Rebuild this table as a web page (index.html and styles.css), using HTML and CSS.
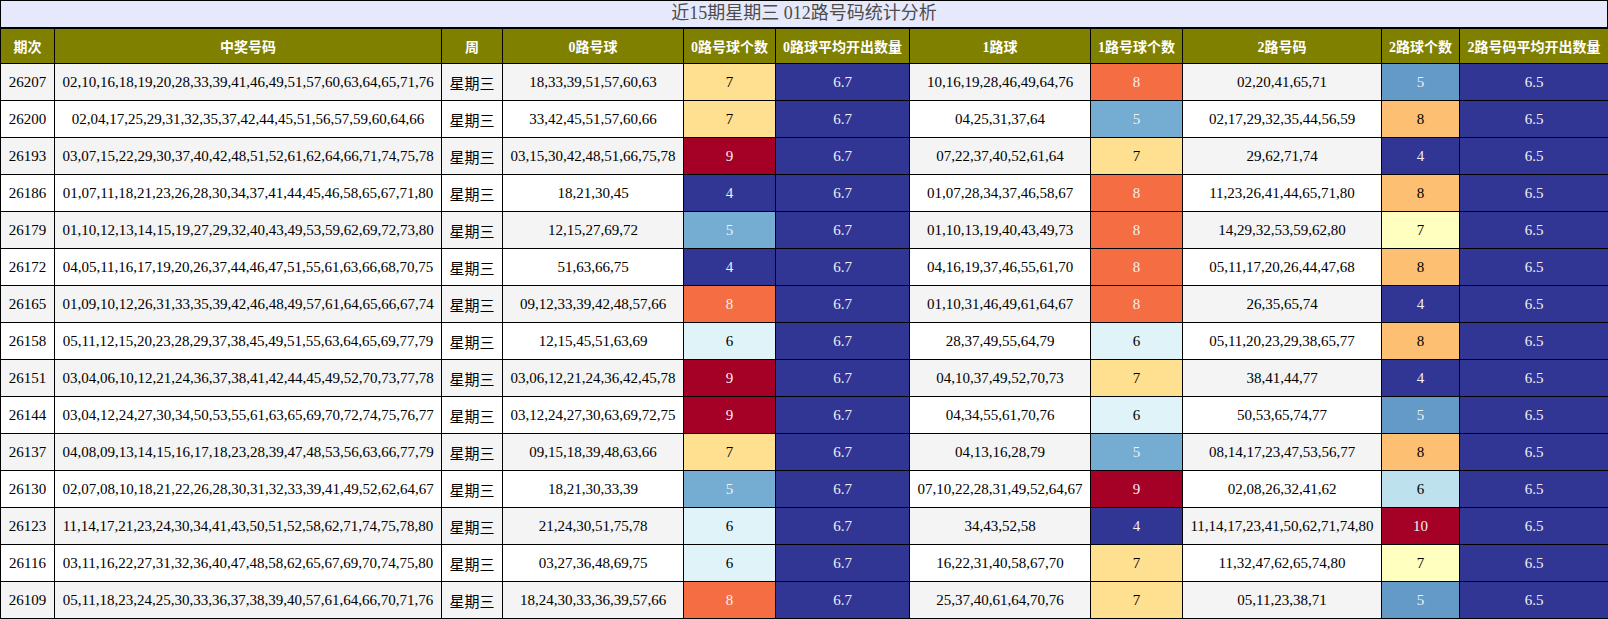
FILE: index.html
```html
<!DOCTYPE html>
<html lang="zh-CN">
<head>
<meta charset="utf-8">
<title>近15期星期三 012路号码统计分析</title>
<link rel="stylesheet" href="styles.css">
</head>
<body>
<div class="title">近15期星期三 012路号码统计分析</div>
<table class="stats">
<colgroup>
<col class="w-qc"><col class="w-zj"><col class="w-zhou"><col class="w-l0"><col class="w-n0"><col class="w-a0"><col class="w-l1"><col class="w-n1"><col class="w-l2"><col class="w-n2"><col class="w-a2">
</colgroup>
<thead>
<tr><th>期次</th><th>中奖号码</th><th>周</th><th>0路号球</th><th>0路号球个数</th><th>0路球平均开出数量</th><th>1路球</th><th>1路号球个数</th><th>2路号码</th><th>2路球个数</th><th>2路号码平均开出数量</th></tr>
</thead>
<tbody>
<tr><td>26207</td><td>02,10,16,18,19,20,28,33,39,41,46,49,51,57,60,63,64,65,71,76</td><td class="wk">星期三</td><td>18,33,39,51,57,60,63</td><td class="q6">7</td><td class="q0">6.7</td><td>10,16,19,28,46,49,64,76</td><td class="q8">8</td><td>02,20,41,65,71</td><td class="r1">5</td><td class="q0">6.5</td></tr>
<tr><td>26200</td><td>02,04,17,25,29,31,32,35,37,42,44,45,51,56,57,59,60,64,66</td><td class="wk">星期三</td><td>33,42,45,51,57,60,66</td><td class="q6">7</td><td class="q0">6.7</td><td>04,25,31,37,64</td><td class="q2">5</td><td>02,17,29,32,35,44,56,59</td><td class="r7">8</td><td class="q0">6.5</td></tr>
<tr><td>26193</td><td>03,07,15,22,29,30,37,40,42,48,51,52,61,62,64,66,71,74,75,78</td><td class="wk">星期三</td><td>03,15,30,42,48,51,66,75,78</td><td class="q10">9</td><td class="q0">6.7</td><td>07,22,37,40,52,61,64</td><td class="q6">7</td><td>29,62,71,74</td><td class="q0">4</td><td class="q0">6.5</td></tr>
<tr><td>26186</td><td>01,07,11,18,21,23,26,28,30,34,37,41,44,45,46,58,65,67,71,80</td><td class="wk">星期三</td><td>18,21,30,45</td><td class="q0">4</td><td class="q0">6.7</td><td>01,07,28,34,37,46,58,67</td><td class="q8">8</td><td>11,23,26,41,44,65,71,80</td><td class="r7">8</td><td class="q0">6.5</td></tr>
<tr><td>26179</td><td>01,10,12,13,14,15,19,27,29,32,40,43,49,53,59,62,69,72,73,80</td><td class="wk">星期三</td><td>12,15,27,69,72</td><td class="q2">5</td><td class="q0">6.7</td><td>01,10,13,19,40,43,49,73</td><td class="q8">8</td><td>14,29,32,53,59,62,80</td><td class="r5">7</td><td class="q0">6.5</td></tr>
<tr><td>26172</td><td>04,05,11,16,17,19,20,26,37,44,46,47,51,55,61,63,66,68,70,75</td><td class="wk">星期三</td><td>51,63,66,75</td><td class="q0">4</td><td class="q0">6.7</td><td>04,16,19,37,46,55,61,70</td><td class="q8">8</td><td>05,11,17,20,26,44,47,68</td><td class="r7">8</td><td class="q0">6.5</td></tr>
<tr><td>26165</td><td>01,09,10,12,26,31,33,35,39,42,46,48,49,57,61,64,65,66,67,74</td><td class="wk">星期三</td><td>09,12,33,39,42,48,57,66</td><td class="q8">8</td><td class="q0">6.7</td><td>01,10,31,46,49,61,64,67</td><td class="q8">8</td><td>26,35,65,74</td><td class="q0">4</td><td class="q0">6.5</td></tr>
<tr><td>26158</td><td>05,11,12,15,20,23,28,29,37,38,45,49,51,55,63,64,65,69,77,79</td><td class="wk">星期三</td><td>12,15,45,51,63,69</td><td class="q4">6</td><td class="q0">6.7</td><td>28,37,49,55,64,79</td><td class="q4">6</td><td>05,11,20,23,29,38,65,77</td><td class="r7">8</td><td class="q0">6.5</td></tr>
<tr><td>26151</td><td>03,04,06,10,12,21,24,36,37,38,41,42,44,45,49,52,70,73,77,78</td><td class="wk">星期三</td><td>03,06,12,21,24,36,42,45,78</td><td class="q10">9</td><td class="q0">6.7</td><td>04,10,37,49,52,70,73</td><td class="q6">7</td><td>38,41,44,77</td><td class="q0">4</td><td class="q0">6.5</td></tr>
<tr><td>26144</td><td>03,04,12,24,27,30,34,50,53,55,61,63,65,69,70,72,74,75,76,77</td><td class="wk">星期三</td><td>03,12,24,27,30,63,69,72,75</td><td class="q10">9</td><td class="q0">6.7</td><td>04,34,55,61,70,76</td><td class="q4">6</td><td>50,53,65,74,77</td><td class="r1">5</td><td class="q0">6.5</td></tr>
<tr><td>26137</td><td>04,08,09,13,14,15,16,17,18,23,28,39,47,48,53,56,63,66,77,79</td><td class="wk">星期三</td><td>09,15,18,39,48,63,66</td><td class="q6">7</td><td class="q0">6.7</td><td>04,13,16,28,79</td><td class="q2">5</td><td>08,14,17,23,47,53,56,77</td><td class="r7">8</td><td class="q0">6.5</td></tr>
<tr><td>26130</td><td>02,07,08,10,18,21,22,26,28,30,31,32,33,39,41,49,52,62,64,67</td><td class="wk">星期三</td><td>18,21,30,33,39</td><td class="q2">5</td><td class="q0">6.7</td><td>07,10,22,28,31,49,52,64,67</td><td class="q10">9</td><td>02,08,26,32,41,62</td><td class="r3">6</td><td class="q0">6.5</td></tr>
<tr><td>26123</td><td>11,14,17,21,23,24,30,34,41,43,50,51,52,58,62,71,74,75,78,80</td><td class="wk">星期三</td><td>21,24,30,51,75,78</td><td class="q4">6</td><td class="q0">6.7</td><td>34,43,52,58</td><td class="q0">4</td><td>11,14,17,23,41,50,62,71,74,80</td><td class="q10">10</td><td class="q0">6.5</td></tr>
<tr><td>26116</td><td>03,11,16,22,27,31,32,36,40,47,48,58,62,65,67,69,70,74,75,80</td><td class="wk">星期三</td><td>03,27,36,48,69,75</td><td class="q4">6</td><td class="q0">6.7</td><td>16,22,31,40,58,67,70</td><td class="q6">7</td><td>11,32,47,62,65,74,80</td><td class="r5">7</td><td class="q0">6.5</td></tr>
<tr><td>26109</td><td>05,11,18,23,24,25,30,33,36,37,38,39,40,57,61,64,66,70,71,76</td><td class="wk">星期三</td><td>18,24,30,33,36,39,57,66</td><td class="q8">8</td><td class="q0">6.7</td><td>25,37,40,61,64,70,76</td><td class="q6">7</td><td>05,11,23,38,71</td><td class="r1">5</td><td class="q0">6.5</td></tr>
</tbody>
</table>
</body>
</html>
```
FILE: styles.css
```css
html, body {
  margin: 0;
  padding: 0;
  background: #ffffff;
}

body {
  font-family: "Liberation Serif", "Noto Sans CJK SC", serif;
  color: #000000;
  width: 1608px;
}

.title {
  box-sizing: border-box;
  height: 28px;
  border: 1px solid #000000;
  border-bottom-width: 1px;
  background: #e6e9fb;
  color: #4d4d4d;
  font-size: 18px;
  line-height: 25px;
  text-align: center;
}

.stats {
  width: 1608px;
  table-layout: fixed;
  border-collapse: collapse;
  font-size: 15px;
}

.w-qc { width: 54px; }
.w-zj { width: 387px; }
.w-zhou { width: 61px; }
.w-l0 { width: 181px; }
.w-n0 { width: 92px; }
.w-a0 { width: 134px; }
.w-l1 { width: 181px; }
.w-n1 { width: 92px; }
.w-l2 { width: 199px; }
.w-n2 { width: 78px; }
.w-a2 { width: 149px; }

.stats th,
.stats td {
  border: 1px solid #000000;
  padding: 0;
  text-align: center;
  vertical-align: middle;
  white-space: nowrap;
  overflow: hidden;
}

.stats th {
  height: 34px;
  background: #808000;
  color: #ffffff;
  font-size: 14px;
  font-weight: bold;
}

.stats td {
  height: 36px;
}

.stats tbody tr:nth-child(odd) td {
  background: #f4f4f4;
}

.stats tbody tr:nth-child(even) td {
  background: #ffffff;
}

.stats td.wk {
  font-family: "Noto Sans CJK SC", sans-serif;
}

/* heat colours: count columns 0/1 (range 4..9) */
.stats tbody tr td.q0 { background: #313695; color: #f1f1f1; }
.stats tbody tr td.q2 { background: #74add1; color: #f1f1f1; }
.stats tbody tr td.q4 { background: #e0f3f8; color: #000000; }
.stats tbody tr td.q6 { background: #fee090; color: #000000; }
.stats tbody tr td.q8 { background: #f46d43; color: #f1f1f1; }
.stats tbody tr td.q10 { background: #a50026; color: #f1f1f1; }

/* heat colours: count column 2 (range 4..10) */
.stats tbody tr td.r1 { background: #649ac7; color: #f1f1f1; }
.stats tbody tr td.r3 { background: #bde2ee; color: #000000; }
.stats tbody tr td.r5 { background: #ffffbf; color: #000000; }
.stats tbody tr td.r7 { background: #fdbf71; color: #000000; }
```
